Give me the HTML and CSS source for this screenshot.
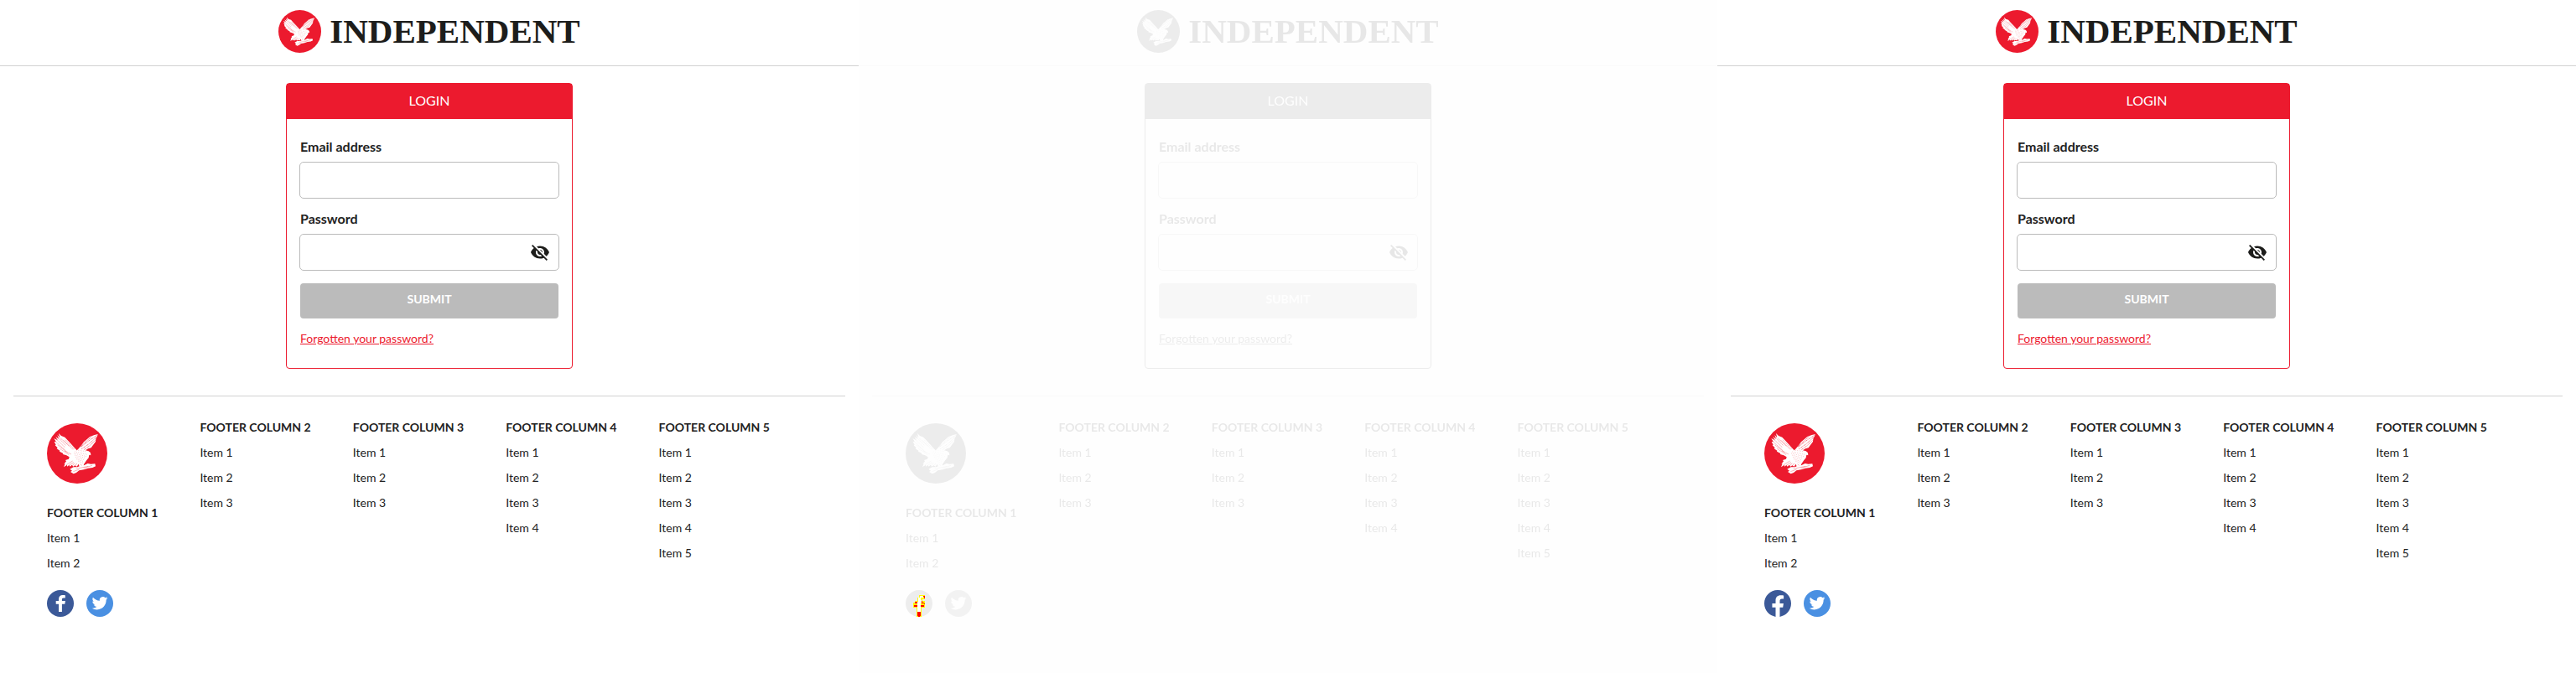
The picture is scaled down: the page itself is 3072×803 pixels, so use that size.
FILE: index.html
```
<!DOCTYPE html>
<html lang="en">
<head>
<meta charset="utf-8">
<meta name="viewport" content="width=device-width, initial-scale=1">
<title>Independent - Login</title>
<link rel="stylesheet" href="styles.css">
</head>
<body>
<svg class="sprite" aria-hidden="true">
  <symbol id="eagle" viewBox="0 0 216 216">
    <circle cx="108" cy="108" r="108" fill="#ec1a2e"/>
    <g fill="#fff">
      <path d="M42 36 46 52 37 42 42 56 31 48 38 61 25 54 33 67 26 66 32 77 29 79 38 88 35 91 46 98 45 101 58 108 57 111 70 115 80 121 78 128 66 132 69 136 61 146 65 145 60 157 72 149 72 155 79 150 83 155 89 149 94 155 100 151 107 155 113 146 116 155 124 154 130 159 132 147 142 132 149 124 151 113 157 115 156 106 149 100 138 97 147 91 158 88 165 78 174 66 175 56 183 39 170 42 154 48 140 60 132 67 124 78 112 92 107 97 97 86 85 73 74 61 64 50 51 45Z"/>
      <path d="M82 164 95 157 109 157 120 152 132 151 146 144 157 146 172 145 174 154 163 159 147 161 132 166 115 169 105 177 95 181 84 174 90 170Z"/>
    </g>
    <g fill="none" stroke="#ec1a2e" stroke-width="1">
      <path d="M40 51 68 80M36 59 65 87M33 68 65 96M38 78 73 104M46 91 79 113M49 54 80 82M60 61 93 94M66 59 98 93M63 99 87 111" stroke-dasharray="7 1"/>
      <path d="M182 41 148 64 120 86M177 50 149 75 124 92M172 62 151 82 132 95M160 48 138 67 121 83" stroke-width="2" stroke-dasharray="3 2"/>
      <path d="M100 102 145 112M98 108 142 119M99 114 138 125M106 96 140 101M102 121 134 131M105 128 132 137M111 135 129 142" stroke-width="2" stroke-dasharray="1 5"/>
      <path d="M92 135 69 149M96 140 78 151M100 143 89 153M108 144 100 151M119 146 125 151M104 163 148 154M94 173 116 165M131 161 162 151"/>
    </g>
  </symbol>
  <symbol id="eye-off" viewBox="0 0 24 24">
    <path fill="#1d1d1b" d="M12 7c2.76 0 5 2.24 5 5 0 .65-.13 1.26-.36 1.83l2.92 2.92c1.51-1.26 2.7-2.89 3.43-4.75-1.73-4.39-6-7.5-11-7.5-1.4 0-2.74.25-3.98.7l2.16 2.16C10.74 7.13 11.35 7 12 7zM2 4.27l2.28 2.28.46.46C3.08 8.3 1.78 10.02 1 12c1.73 4.39 6 7.5 11 7.5 1.55 0 3.03-.3 4.38-.84l.42.42L19.73 22 21 20.73 3.27 3 2 4.27zM7.53 9.8l1.55 1.55c-.05.21-.08.43-.08.65 0 1.66 1.34 3 3 3 .22 0 .44-.03.65-.08l1.55 1.55c-.67.33-1.41.53-2.2.53-2.76 0-5-2.24-5-5 0-.79.2-1.53.53-2.2zm4.31-.78l3.15 3.15.02-.16c0-1.66-1.34-3-3-3l-.17.01z"/>
  </symbol>
  <symbol id="facebook" viewBox="0 0 32 32">
    <circle cx="16" cy="16" r="16" fill="#3b5998"/>
    <path fill="#fff" d="M14 26V16.700H10.700V13H14V11C14 7.700 16 6 18.800 6c1.500 0 2.600.1 3 .2v3.400h-2c-1.600 0-1.900.8-1.900 1.900V13h4l-.6 3.700h-3.400V26z"/>
  </symbol>
  <symbol id="facebook-new" viewBox="0 0 24 24">
    <path fill="#3b5998" d="M24 12.073c0-6.627-5.373-12-12-12s-12 5.373-12 12c0 5.990 4.388 10.954 10.125 11.854v-8.385H7.078v-3.470h3.047V9.430c0-3.007 1.792-4.669 4.533-4.669 1.312 0 2.686.235 2.686.235v2.953H15.830c-1.491 0-1.956.925-1.956 1.874v2.250h3.328l-.532 3.470h-2.796v8.385C19.612 23.027 24 18.062 24 12.073z"/>
  </symbol>
  <symbol id="facebook-diff" viewBox="0 0 32 32">
    <circle cx="16" cy="16" r="16" fill="#ededed"/>
    <path fill="#ff0" d="M16 6h7v5h-3v2h3v8h-4v11h-6V21H9v-6h2v-2h3V9h2z"/>
    <path fill="#fff" d="M17 7h4v2h-3v3h1v3h-1v3h4v1h-4v7h-4v-7h-4v-1h4v-4h1V9h2z"/>
    <path fill="#f00" d="M21 7h2v3h-1V8h-1zM11 14h3v2h-3zM19 13h1v2h2v1h-3zM10 18h4v2h-4zM18 18h4v2h-4zM14 26h4v5h-1v1h-2v-1h-1zM22 16h1v1h-1z"/>
  </symbol>
  <symbol id="twitter" viewBox="0 0 32 32">
    <circle cx="16" cy="16" r="16" fill="#4a90e2"/>
    <path fill="#fff" transform="translate(6.600 6.200) scale(.79)" d="M23.953 4.570a10 10 0 01-2.825.775 4.958 4.958 0 002.163-2.723c-.951.555-2.005.959-3.127 1.184a4.920 4.920 0 00-8.384 4.482C7.690 8.095 4.067 6.130 1.640 3.162a4.822 4.822 0 00-.666 2.475c0 1.710.870 3.213 2.188 4.096a4.904 4.904 0 01-2.228-.616v.060a4.923 4.923 0 003.946 4.827 4.996 4.996 0 01-2.212.085 4.936 4.936 0 004.604 3.417 9.867 9.867 0 01-6.102 2.105c-.390 0-.779-.023-1.170-.067a13.995 13.995 0 007.557 2.209c9.053 0 13.998-7.496 13.998-13.985 0-.210 0-.420-.015-.630A9.935 9.935 0 0024 4.590z"/>
  </symbol>
</svg>

<div class="panels">
  <div class="panel">
    <header class="header">
      <svg class="header-logo" aria-hidden="true"><use href="#eagle"/></svg>
      <span class="wordmark">INDEPENDENT</span>
    </header>
    <main class="main">
      <form class="card">
        <h1 class="card-title">LOGIN</h1>
        <div class="card-body">
          <label class="label" for="email-a">Email address</label>
          <div class="field"><input class="input" id="email-a" type="email"></div>
          <label class="label" for="password-a">Password</label>
          <div class="field">
            <input class="input" id="password-a" type="password">
            <button class="toggle" type="button" aria-label="Show password"><svg class="toggle-icon"><use href="#eye-off"/></svg></button>
          </div>
          <button class="submit" type="submit">SUBMIT</button>
          <a class="forgot" href="#">Forgotten your password?</a>
        </div>
      </form>
    </main>
    <footer class="footer">
      <section class="column">
        <svg class="footer-logo" aria-hidden="true"><use href="#eagle"/></svg>
        <h2 class="column-title">FOOTER COLUMN 1</h2>
        <a class="item" href="#">Item 1</a>
        <a class="item" href="#">Item 2</a>
        <div class="social">
          <a class="social-link" href="#" aria-label="Facebook"><svg class="social-icon"><use href="#facebook"/></svg></a>
          <a class="social-link" href="#" aria-label="Twitter"><svg class="social-icon"><use href="#twitter"/></svg></a>
        </div>
      </section>
      <section class="column">
        <h2 class="column-title">FOOTER COLUMN 2</h2>
        <a class="item" href="#">Item 1</a>
        <a class="item" href="#">Item 2</a>
        <a class="item" href="#">Item 3</a>
      </section>
      <section class="column">
        <h2 class="column-title">FOOTER COLUMN 3</h2>
        <a class="item" href="#">Item 1</a>
        <a class="item" href="#">Item 2</a>
        <a class="item" href="#">Item 3</a>
      </section>
      <section class="column">
        <h2 class="column-title">FOOTER COLUMN 4</h2>
        <a class="item" href="#">Item 1</a>
        <a class="item" href="#">Item 2</a>
        <a class="item" href="#">Item 3</a>
        <a class="item" href="#">Item 4</a>
      </section>
      <section class="column">
        <h2 class="column-title">FOOTER COLUMN 5</h2>
        <a class="item" href="#">Item 1</a>
        <a class="item" href="#">Item 2</a>
        <a class="item" href="#">Item 3</a>
        <a class="item" href="#">Item 4</a>
        <a class="item" href="#">Item 5</a>
      </section>
    </footer>
  </div>

  <div class="panel panel-diff">
    <header class="header faded">
      <svg class="header-logo" aria-hidden="true"><use href="#eagle"/></svg>
      <span class="wordmark">INDEPENDENT</span>
    </header>
    <main class="main faded">
      <form class="card">
        <h1 class="card-title">LOGIN</h1>
        <div class="card-body">
          <label class="label" for="email-b">Email address</label>
          <div class="field"><input class="input" id="email-b" type="email"></div>
          <label class="label" for="password-b">Password</label>
          <div class="field">
            <input class="input" id="password-b" type="password">
            <button class="toggle" type="button" aria-label="Show password"><svg class="toggle-icon"><use href="#eye-off"/></svg></button>
          </div>
          <button class="submit" type="submit">SUBMIT</button>
          <a class="forgot" href="#">Forgotten your password?</a>
        </div>
      </form>
    </main>
    <footer class="footer">
      <section class="column">
        <svg class="footer-logo faded" aria-hidden="true"><use href="#eagle"/></svg>
        <h2 class="column-title faded">FOOTER COLUMN 1</h2>
        <a class="item faded" href="#">Item 1</a>
        <a class="item faded" href="#">Item 2</a>
        <div class="social">
          <a class="social-link" href="#" aria-label="Facebook"><svg class="social-icon"><use href="#facebook-diff"/></svg></a>
          <a class="social-link faded" href="#" aria-label="Twitter"><svg class="social-icon"><use href="#twitter"/></svg></a>
        </div>
      </section>
      <section class="column faded">
        <h2 class="column-title">FOOTER COLUMN 2</h2>
        <a class="item" href="#">Item 1</a>
        <a class="item" href="#">Item 2</a>
        <a class="item" href="#">Item 3</a>
      </section>
      <section class="column faded">
        <h2 class="column-title">FOOTER COLUMN 3</h2>
        <a class="item" href="#">Item 1</a>
        <a class="item" href="#">Item 2</a>
        <a class="item" href="#">Item 3</a>
      </section>
      <section class="column faded">
        <h2 class="column-title">FOOTER COLUMN 4</h2>
        <a class="item" href="#">Item 1</a>
        <a class="item" href="#">Item 2</a>
        <a class="item" href="#">Item 3</a>
        <a class="item" href="#">Item 4</a>
      </section>
      <section class="column faded">
        <h2 class="column-title">FOOTER COLUMN 5</h2>
        <a class="item" href="#">Item 1</a>
        <a class="item" href="#">Item 2</a>
        <a class="item" href="#">Item 3</a>
        <a class="item" href="#">Item 4</a>
        <a class="item" href="#">Item 5</a>
      </section>
    </footer>
  </div>

  <div class="panel">
    <header class="header">
      <svg class="header-logo" aria-hidden="true"><use href="#eagle"/></svg>
      <span class="wordmark">INDEPENDENT</span>
    </header>
    <main class="main">
      <form class="card">
        <h1 class="card-title">LOGIN</h1>
        <div class="card-body">
          <label class="label" for="email-c">Email address</label>
          <div class="field"><input class="input" id="email-c" type="email"></div>
          <label class="label" for="password-c">Password</label>
          <div class="field">
            <input class="input" id="password-c" type="password">
            <button class="toggle" type="button" aria-label="Show password"><svg class="toggle-icon"><use href="#eye-off"/></svg></button>
          </div>
          <button class="submit" type="submit">SUBMIT</button>
          <a class="forgot" href="#">Forgotten your password?</a>
        </div>
      </form>
    </main>
    <footer class="footer">
      <section class="column">
        <svg class="footer-logo" aria-hidden="true"><use href="#eagle"/></svg>
        <h2 class="column-title">FOOTER COLUMN 1</h2>
        <a class="item" href="#">Item 1</a>
        <a class="item" href="#">Item 2</a>
        <div class="social">
          <a class="social-link" href="#" aria-label="Facebook"><svg class="social-icon"><use href="#facebook-new"/></svg></a>
          <a class="social-link" href="#" aria-label="Twitter"><svg class="social-icon"><use href="#twitter"/></svg></a>
        </div>
      </section>
      <section class="column">
        <h2 class="column-title">FOOTER COLUMN 2</h2>
        <a class="item" href="#">Item 1</a>
        <a class="item" href="#">Item 2</a>
        <a class="item" href="#">Item 3</a>
      </section>
      <section class="column">
        <h2 class="column-title">FOOTER COLUMN 3</h2>
        <a class="item" href="#">Item 1</a>
        <a class="item" href="#">Item 2</a>
        <a class="item" href="#">Item 3</a>
      </section>
      <section class="column">
        <h2 class="column-title">FOOTER COLUMN 4</h2>
        <a class="item" href="#">Item 1</a>
        <a class="item" href="#">Item 2</a>
        <a class="item" href="#">Item 3</a>
        <a class="item" href="#">Item 4</a>
      </section>
      <section class="column">
        <h2 class="column-title">FOOTER COLUMN 5</h2>
        <a class="item" href="#">Item 1</a>
        <a class="item" href="#">Item 2</a>
        <a class="item" href="#">Item 3</a>
        <a class="item" href="#">Item 4</a>
        <a class="item" href="#">Item 5</a>
      </section>
    </footer>
  </div>
</div>
</body>
</html>
```

FILE: styles.css
```
* { box-sizing: border-box; }

body {
  margin: 0;
  background: #fff;
  color: #222;
  font-family: Lato, "Open Sans", sans-serif;
  font-size: 14px;
  line-height: 20px;
}

.sprite { display: none; }

.panels {
  display: grid;
  grid-template-columns: repeat(3, 1fr);
  min-height: 100vh;
}

.panel-diff { background: #fefefe; }

.faded { filter: grayscale(1) opacity(10%); }

.header {
  display: flex;
  justify-content: center;
  align-items: center;
  gap: 10px;
  padding: 12px 0 15px;
  border-bottom: 1px solid #d1d1d1;
}

.header-logo { width: 51px; height: 51px; }

.wordmark {
  color: #1d1d1b;
  font-family: "Liberation Serif", serif;
  font-size: 41px;
  font-weight: 700;
  line-height: 51px;
}

.main {
  display: flex;
  justify-content: center;
  padding: 20px 16px 32px;
}

.card {
  width: 100%;
  max-width: 342px;
  border: 1px solid #ec1a2e;
  border-radius: 4px;
}

.card-title {
  margin: 0;
  padding: 10px 0 12px;
  background: #ec1a2e;
  color: #fff;
  font-size: 16px;
  font-weight: 400;
  line-height: 20px;
  text-align: center;
}

.card-body {
  display: flex;
  flex-direction: column;
  padding: 23px 15px 25px;
}

.label {
  padding: 0 1px;
  margin-bottom: 8px;
  font-size: 16px;
  font-weight: 700;
  line-height: 20px;
}

.field {
  display: flex;
  position: relative;
  margin-bottom: 14px;
}

.input {
  width: 100%;
  height: 44px;
  padding: 0 12px;
  border: 1px solid #bbb;
  border-radius: 5px;
  background: #fff;
  font: inherit;
}

.toggle {
  position: absolute;
  top: 10px;
  right: 11px;
  padding: 0;
  border: 0;
  background: none;
}

.toggle-icon { display: block; width: 24px; height: 24px; }

.submit {
  height: 42px;
  margin: 1px 1px 14px;
  padding: 0 0 4px;
  border: 0;
  border-radius: 4px;
  background: #bbb;
  color: #fff;
  font: inherit;
  font-weight: 700;
}

.forgot {
  align-self: flex-start;
  margin-left: 1px;
  color: #ec1a2e;
  line-height: 20px;
}

.footer {
  display: grid;
  grid-template-columns: repeat(5, 1fr);
  margin: 0 16px;
  padding: 27px 40px;
  border-top: 1px solid #d1d1d1;
}

.panel-diff .footer { border-color: #fafafa; }

.column {
  display: flex;
  flex-direction: column;
  align-items: flex-start;
}

.footer-logo {
  width: 72px;
  height: 72px;
  margin: 5px 0 25px;
}

.column-title {
  margin: 0;
  font-size: 14px;
  font-weight: 700;
  line-height: 20px;
}

.item {
  margin-top: 10px;
  color: #222;
  text-decoration: none;
}

.social {
  display: flex;
  gap: 15px;
  margin-top: 22px;
}

.social-icon { display: block; width: 32px; height: 32px; }
```
